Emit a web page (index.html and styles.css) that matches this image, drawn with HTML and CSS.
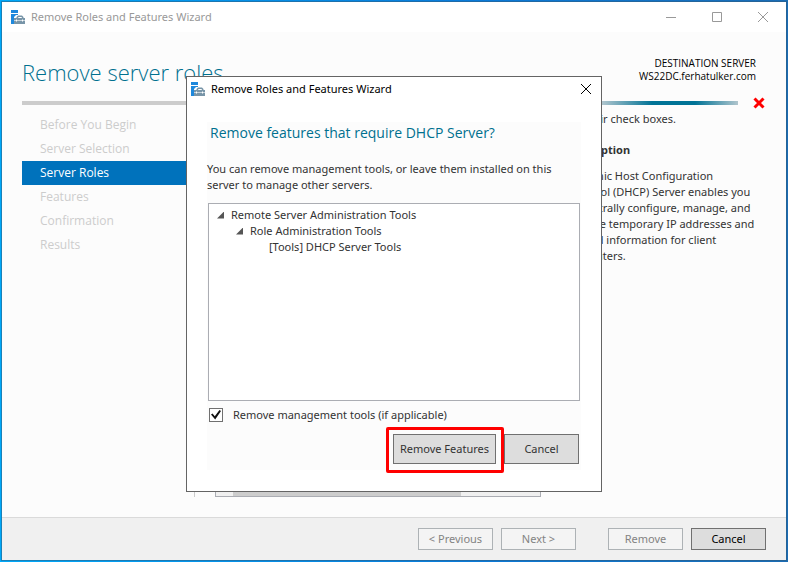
FILE: index.html
```html
<!DOCTYPE html>
<html lang="en">
<head>
  <meta charset="utf-8">
  <title>Remove Roles and Features Wizard</title>
  <link rel="stylesheet" href="styles.css">
</head>
<body>
  <svg width="0" height="0" class="defs">
    <symbol id="wizard" viewBox="0 0 14 14">
      <path d="M0 0h7v3H0zM0 4h7v1H5L3 7v7H0z" fill="#1e88dc"/>
      <path d="M3 8h2.500V7L7 5.500h4L12.500 7v1H14v6H3z" fill="#7895a8"/>
      <path d="M7 8l.5-1h3l.5 1z" fill="#fff"/>
      <path d="M3 10.500h11" stroke="#c8d4dc"/>
      <path d="M5.500 9.500v2M11.500 9.500v2" stroke="#fff"/>
    </symbol>
  </svg>

  <div class="window">
    <div class="titlebar inactive">
      <svg class="app-icon"><use href="#wizard"/></svg>
      <span class="caption">Remove Roles and Features Wizard</span>
      <button class="win-button" aria-label="Minimize"><svg viewBox="0 0 10 10"><path d="M0 5.500h10"/></svg></button>
      <button class="win-button" aria-label="Maximize"><svg viewBox="0 0 10 10"><path d="M.5.5h9v9h-9z"/></svg></button>
      <button class="win-button" aria-label="Close"><svg viewBox="0 0 10 10"><path d="M0 0l10 10M10 0L0 10"/></svg></button>
    </div>

    <main>
      <header>
        <h1>Remove server roles</h1>
        <div class="server">DESTINATION SERVER<br>WS22DC.ferhatulker.com</div>
      </header>
      <div class="status">
        <div class="progress"></div>
        <svg class="error" viewBox="0 0 12 12"><path d="M1.500 1.500l9 9M10.500 1.500l-9 9"/></svg>
      </div>
      <div class="columns">
        <nav>
          <a href="#">Before You Begin</a>
          <a href="#">Server Selection</a>
          <a href="#" class="current">Server Roles</a>
          <a href="#">Features</a>
          <a href="#">Confirmation</a>
          <a href="#">Results</a>
        </nav>
        <section class="page">
          <p class="intro">clear their check boxes.</p>
          <div class="roles">
            <div class="scrollbar"><div class="thumb"></div></div>
          </div>
          <div class="description">
            <h2>Description</h2>
            <p>Dynamic Host Configuration<br>Protocol (DHCP) Server enables you<br>to centrally configure, manage, and<br>provide temporary IP addresses and<br>related information for client<br>computers.</p>
          </div>
        </section>
      </div>
    </main>

    <footer>
      <button disabled>&lt; Previous</button>
      <button disabled>Next &gt;</button>
      <button disabled class="apart">Remove</button>
      <button>Cancel</button>
    </footer>
  </div>

  <div class="overlay">
    <div class="dialog" role="dialog" aria-labelledby="dialog-title">
      <div class="titlebar">
        <svg class="app-icon"><use href="#wizard"/></svg>
        <span class="caption" id="dialog-title">Remove Roles and Features Wizard</span>
        <button class="win-button" aria-label="Close"><svg viewBox="0 0 10 10"><path d="M0 0l10 10M10 0L0 10"/></svg></button>
      </div>
      <div class="panel">
        <h2>Remove features that require DHCP Server?</h2>
        <p>You can remove management tools, or leave them installed on this<br>server to manage other servers.</p>
        <ul class="tree">
          <li><span class="open">Remote Server Administration Tools</span>
            <ul>
              <li><span class="open">Role Administration Tools</span>
                <ul>
                  <li><span>[Tools] DHCP Server Tools</span></li>
                </ul>
              </li>
            </ul>
          </li>
        </ul>
        <label><input type="checkbox" checked>Remove management tools (if applicable)</label>
        <div class="actions">
          <div class="marked"><button>Remove Features</button></div>
          <button>Cancel</button>
        </div>
      </div>
    </div>
  </div>
</body>
</html>
```
FILE: styles.css
```css
* {
  box-sizing: border-box;
}
body {
  margin: 0;
  padding: 1px;
  min-height: 100vh;
  display: flex;
  font: 11px/16px "Noto Sans", "Open Sans", sans-serif;
  color: #333;
  background: linear-gradient(90deg, #00a8f8, #0a7ad8 60%, #1a6cb4);
}
h1, h2, p, ul {
  margin: 0;
  padding: 0;
}
.defs {
  position: absolute;
}
.window {
  flex: 1;
  min-width: 0;
  display: flex;
  flex-direction: column;
  border: 1px solid rgba(50, 90, 120, 0.5);
  background: #fcfcfc;
  background-clip: padding-box;
}

.titlebar {
  display: flex;
  align-items: center;
  height: 30px;
  padding-left: 9px;
  background: #fff;
  color: #000;
}
.titlebar.inactive {
  color: #999;
}
.app-icon {
  width: 14px;
  height: 14px;
  margin-right: 6px;
}
.caption {
  flex: 1;
}
.win-button {
  width: 46px;
  height: 30px;
  min-width: 0;
  padding: 0;
  border: 0;
  background: none;
  color: inherit;
}
.win-button svg {
  display: block;
  width: 10px;
  height: 10px;
  margin: auto;
  overflow: visible;
  fill: none;
  stroke: currentColor;
}

main {
  flex: 1;
  display: flex;
  flex-direction: column;
  padding: 24px 20px 20px;
}
header {
  display: flex;
  justify-content: space-between;
}
h1 {
  font: 300 22px/32px "Open Sans", sans-serif;
  color: #00708f;
}
.server {
  padding: 1px 10px 0 0;
  font: 10px/13px "Open Sans", sans-serif;
  text-align: right;
  color: #000;
}
.status {
  display: flex;
  align-items: center;
  height: 12px;
  margin-top: 9px;
}
.progress {
  flex: 1;
  height: 4px;
  background: linear-gradient(90deg, #ccc 75%, #b0c5cd 81%, #007396 88%, #007396 94%, #b0c5cd);
}
.error {
  width: 12px;
  height: 12px;
  margin: 0 1px 0 15px;
  stroke: #f00;
  stroke-width: 3;
}

.columns {
  flex: 1;
  display: flex;
}
nav {
  width: 173px;
  padding-top: 4px;
  border-right: 1px solid #ccc;
}
nav a {
  display: block;
  height: 24px;
  padding-left: 18px;
  font: 12px/24px "Open Sans", sans-serif;
  color: #ccc;
  text-decoration: none;
}
nav .current {
  background: #0072bc;
  color: #fff;
}
.page {
  flex: 1;
  min-width: 0;
  display: grid;
  grid-template: 33px 1fr / 326px 1fr;
  column-gap: 26px;
  padding-left: 20px;
}
.intro {
  grid-column: 1 / 3;
  padding: 2px 90px 0 0;
  text-align: right;
}
.roles {
  display: flex;
  flex-direction: column;
  justify-content: flex-end;
  border: 1px solid #abadb3;
  background: #fff;
}
.scrollbar {
  height: 17px;
  padding: 0 79px 0 17px;
  background: #f0f0f0;
}
.thumb {
  height: 17px;
  background: #cdcdcd;
}
.description {
  white-space: nowrap;
}
.description h2 {
  margin-bottom: 10px;
  font-size: 11px;
}

button {
  min-width: 75px;
  height: 22px;
  padding: 0;
  border: 1px solid #707070;
  background: #ddd;
  color: #000;
  font: inherit;
}
button:disabled {
  border-color: #adb2b5;
  background: #f4f4f4;
  color: #838383;
}
footer {
  display: flex;
  justify-content: flex-end;
  gap: 8px;
  padding: 10px 20px;
  border-top: 1px solid #dadada;
  background: #f0f0f0;
}
.apart {
  margin-left: 24px;
}

.overlay {
  position: absolute;
  top: 76px;
  left: 0;
  right: 0;
  display: flex;
  justify-content: center;
}
.dialog {
  width: 416px;
  border: 1px solid #646464;
  background: #fff;
}
.dialog .titlebar {
  height: 24px;
  padding-left: 4px;
}
.dialog .win-button {
  width: 30px;
  height: 24px;
}
.panel {
  margin: 21px 20px;
  background: #fcfcfc;
}
.panel h2 {
  padding-left: 3px;
  font: 14px/22px "Open Sans", sans-serif;
  color: #00708f;
}
.panel p {
  margin: 17px 0 10px;
  white-space: nowrap;
}
.tree {
  height: 198px;
  margin: 0 1px;
  padding: 3px 8px;
  border: 1px solid #abadb3;
  background: #fff;
}
.tree li {
  list-style: none;
}
.tree ul {
  padding-left: 19px;
}
.tree span {
  display: flex;
  align-items: center;
  padding-left: 14px;
}
.tree .open {
  padding-left: 0;
}
.open::before {
  content: "";
  width: 7px;
  height: 7px;
  margin-right: 7px;
  background: #555;
  clip-path: polygon(100% 0, 100% 100%, 0 100%);
}
label {
  display: flex;
  align-items: center;
  height: 16px;
  margin: 6px 2px 4px;
}
input {
  appearance: none;
  width: 14px;
  height: 14px;
  margin: 0 10px 0 0;
  border: 1px solid #707070;
  background: #fff;
}
input:checked::before {
  content: "";
  display: block;
  width: 10px;
  height: 10px;
  margin: 1px;
  background: #111;
  clip-path: polygon(0 45%, 15% 35%, 38% 62%, 85% 0, 100% 10%, 42% 95%);
}
.actions {
  display: flex;
  align-items: flex-start;
  justify-content: flex-end;
  height: 43px;
  padding-right: 2px;
}
.actions button {
  height: 30px;
  margin-top: 7px;
  color: #333;
}
.actions .marked {
  padding: 4px 5px 6px 4px;
  border: 3px solid #f00;
  border-radius: 2px;
}
.marked button {
  display: block;
  width: 103px;
  margin-top: 0;
}
```
